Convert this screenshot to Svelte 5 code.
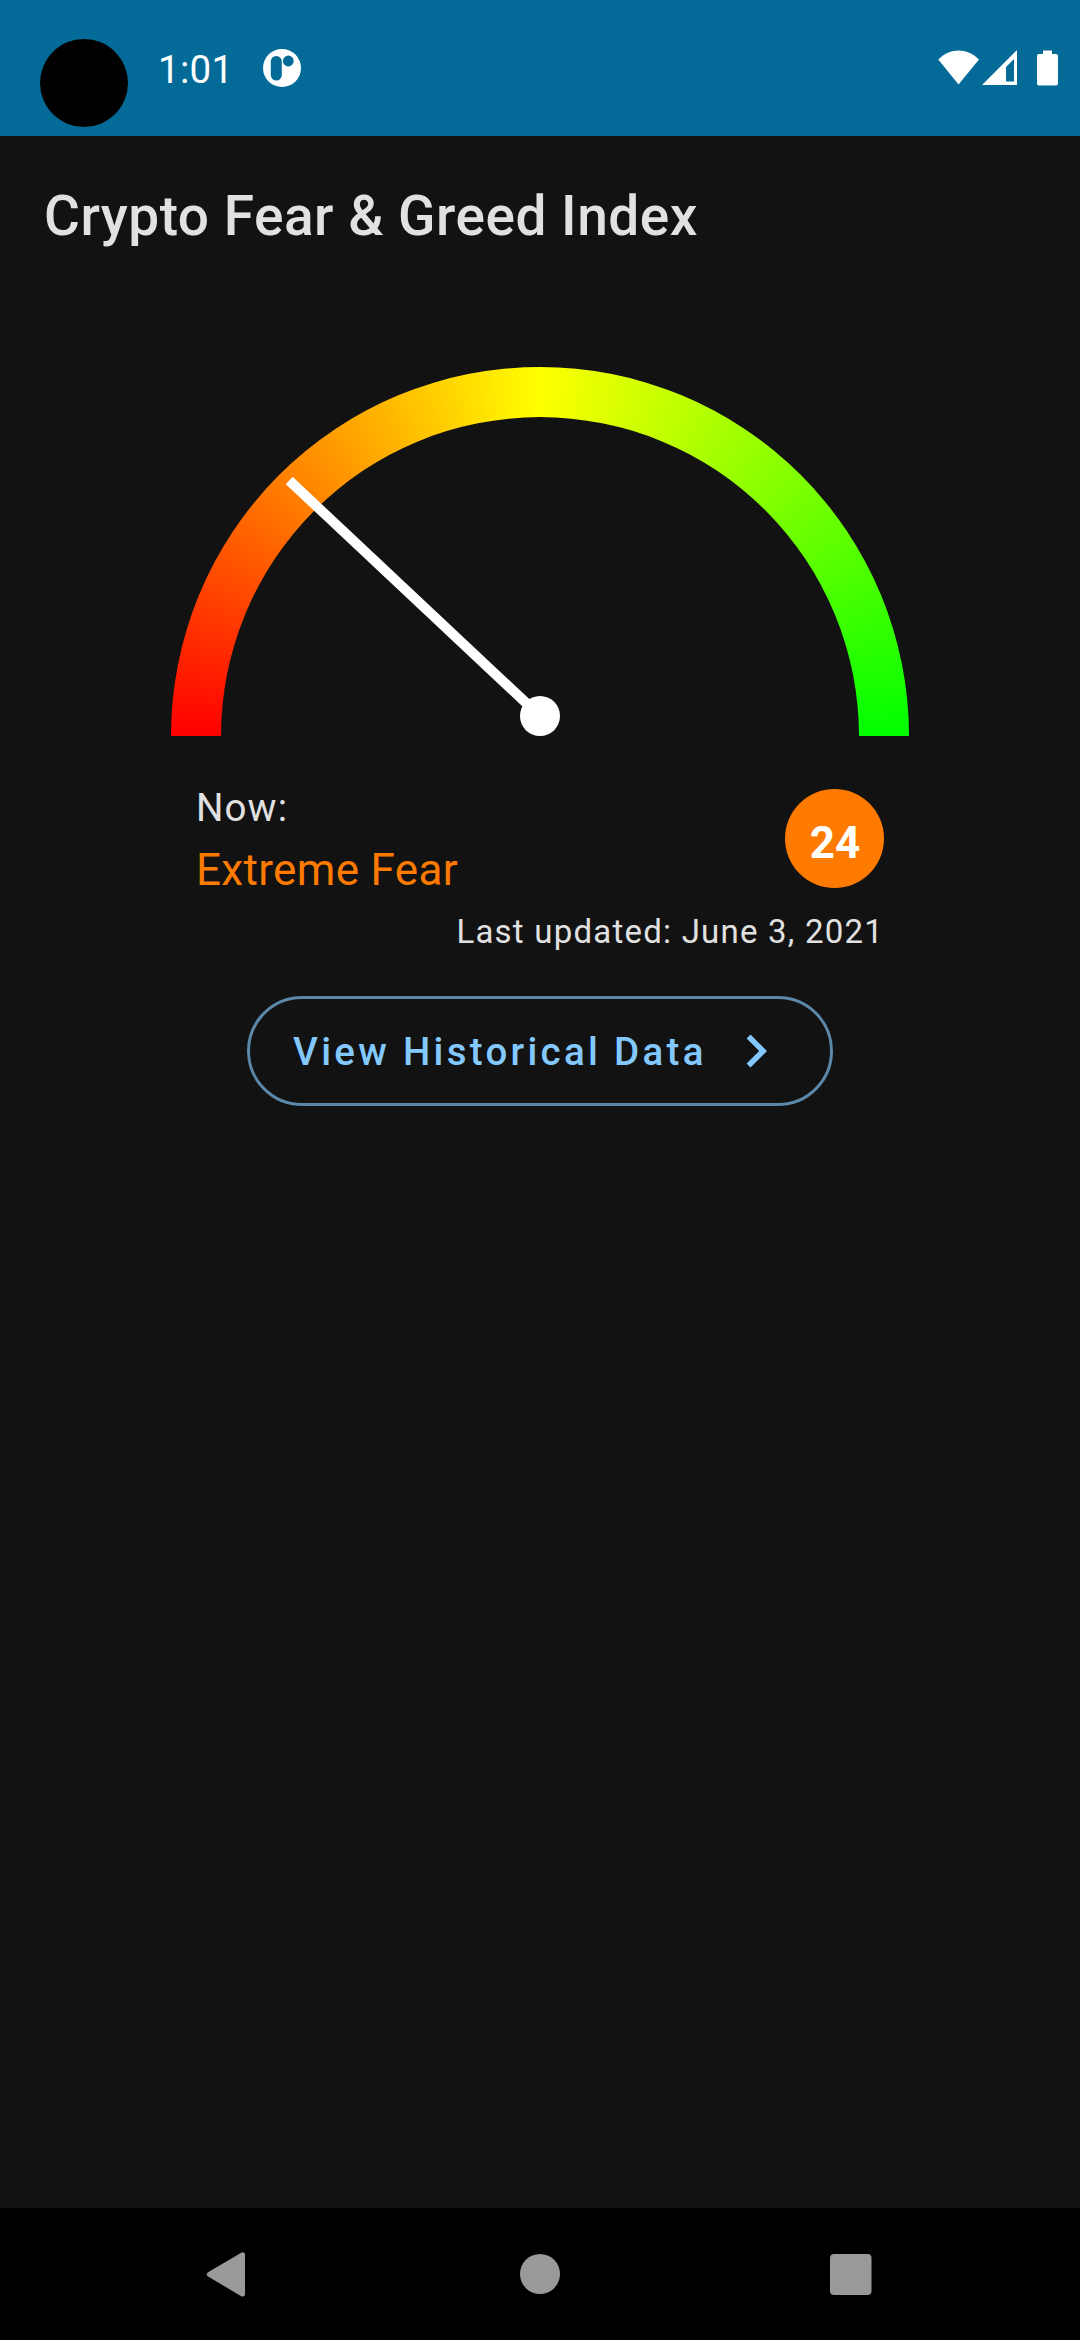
<script>
  const value = 24;
  const mood = 'Extreme Fear';
  const updated = 'June 3, 2021';
  const needleLength = 344;
  const angle = Math.PI * (1 - value / 100);
  const tipX = 369 + needleLength * Math.cos(angle);
  const tipY = 349 - needleLength * Math.sin(angle);
</script>

<div class="screen">
  <div class="status">
    <div class="camera"></div>
    <span class="clock">1:01</span>
    <svg class="app-icon" width="38" height="38" viewBox="0 0 38 38">
      <circle cx="19" cy="19" r="19" fill="#fff" />
      <rect x="7.8" y="7" width="11" height="24.5" rx="5.5" fill="#046b99" />
      <circle cx="25.3" cy="12" r="5.4" fill="#046b99" />
    </svg>
    <svg class="system" width="122" height="36" viewBox="0 0 122 36">
      <path d="M0.3 9.500C12-2.500 29-2.500 41 9.500L20.500 34.500Z" fill="#fff" />
      <path fill-rule="evenodd" d="M79 0V35H44ZM76 9L68 17V31.500H76Z" fill="#fff" />
      <path d="M105 0.500H114V4H118Q120 4 120 6V33.500Q120 35.500 118 35.500H101Q99 35.500 99 33.500V6Q99 4 101 4H105Z" fill="#fff" />
    </svg>
  </div>

  <main>
    <h1>Crypto Fear &amp; Greed Index</h1>

    <div class="gauge">
      <div class="arc"></div>
      <svg class="needle" width="738" height="369" viewBox="0 0 738 369">
        <line x1="369" y1="349" x2={tipX} y2={tipY} stroke="#fff" stroke-width="10" />
        <circle cx="369" cy="349" r="20" fill="#fff" />
      </svg>
    </div>

    <section class="info">
      <div class="row">
        <div>
          <div class="now">Now:</div>
          <div class="mood">{mood}</div>
        </div>
        <div class="badge">{value}</div>
      </div>
      <div class="updated">Last updated: {updated}</div>
    </section>

    <button>
      <span>View Historical Data</span>
      <svg width="66" height="66" viewBox="0 0 24 24">
        <path d="M10 6 8.590 7.410 13.170 12l-4.580 4.590L10 18l6-6z" fill="#83c9ff" />
      </svg>
    </button>
  </main>

  <nav>
    <svg width="44" height="48" viewBox="0 0 44 48">
      <path d="M36.500 4.800V44L3.300 24.400Z" fill="#999" stroke="#999" stroke-width="5" stroke-linejoin="round" />
    </svg>
    <svg width="42" height="42" viewBox="0 0 42 42"><circle cx="21" cy="21" r="20" fill="#999" /></svg>
    <svg width="42" height="42" viewBox="0 0 42 42"><rect x="0" y="0.900" width="41.500" height="41.100" rx="4" fill="#999" /></svg>
  </nav>
</div>

<style>
  :global(body) {
    margin: 0;
    background: #121212;
  }
  .screen {
    width: 1080px;
    height: 2340px;
    display: flex;
    flex-direction: column;
    background: #121212;
    color: #e1e1e1;
    font-family: Roboto, sans-serif;
    overflow: hidden;
  }
  .status {
    box-sizing: border-box;
    height: 136px;
    flex: none;
    display: flex;
    align-items: flex-start;
    padding: 39px 20px 0 40px;
    background: #046b99;
    color: #fff;
  }
  .camera {
    width: 88px;
    height: 88px;
    border-radius: 50%;
    background: #000;
  }
  .clock {
    margin: 8px 0 0 30px;
    width: 73px;
    font-size: 38.5px;
    line-height: 45px;
    letter-spacing: 0.3px;
    white-space: nowrap;
  }
  .app-icon {
    margin: 10px 0 0 32px;
  }
  .system {
    margin: 11px 0 0 auto;
  }
  main {
    flex: 1;
    display: flex;
    flex-direction: column;
    align-items: center;
    padding: 48px 44px 0;
  }
  h1 {
    align-self: stretch;
    margin: 0;
    font-size: 55px;
    font-weight: 500;
    line-height: 64px;
    letter-spacing: 0.5px;
    white-space: nowrap;
  }
  .gauge {
    margin-top: 119px;
    display: grid;
    width: 738px;
    height: 369px;
  }
  .arc,
  .needle {
    grid-area: 1 / 1;
  }
  .needle {
    z-index: 1;
  }
  .arc {
    background: conic-gradient(from -90deg at 50% 100%, #f00 0deg, #ff0 90deg, #0f0 180deg, #0f0 270deg, #f00 270deg);
    clip-path: path('M0 369A369 369 0 0 1 738 369H688A319 319 0 0 0 50 369Z');
  }
  .info {
    width: 688px;
    margin-top: 49px;
  }
  .row {
    display: flex;
    justify-content: space-between;
    height: 111px;
  }
  .now {
    font-size: 38.5px;
    line-height: 45px;
    letter-spacing: 1.1px;
  }
  .mood {
    margin-top: 14px;
    font-size: 44px;
    line-height: 52px;
    letter-spacing: 0.33px;
    color: #ff7a00;
  }
  .badge {
    box-sizing: border-box;
    width: 99px;
    height: 99px;
    margin-top: 4px;
    padding: 5px 0 0 1px;
    border-radius: 50%;
    background: #ff7a00;
    color: #fff;
    font-size: 44px;
    font-weight: 700;
    line-height: 99px;
    text-align: center;
  }
  .updated {
    margin-top: 16px;
    font-size: 33px;
    line-height: 39px;
    letter-spacing: 1.22px;
    text-align: right;
  }
  button {
    box-sizing: border-box;
    width: 586px;
    height: 110px;
    margin-top: 45px;
    padding: 0 41px 0 43px;
    display: flex;
    align-items: center;
    justify-content: space-between;
    border: 3px solid #5b87a8;
    border-radius: 55px;
    background: transparent;
    color: #83c9ff;
    font-family: inherit;
    font-size: 38.5px;
    font-weight: 500;
    line-height: 45px;
    letter-spacing: 3.3px;
    white-space: nowrap;
  }
  nav {
    box-sizing: border-box;
    height: 132px;
    flex: none;
    display: flex;
    align-items: center;
    justify-content: space-between;
    padding: 0 208px 0 206px;
    background: #000;
  }
</style>
